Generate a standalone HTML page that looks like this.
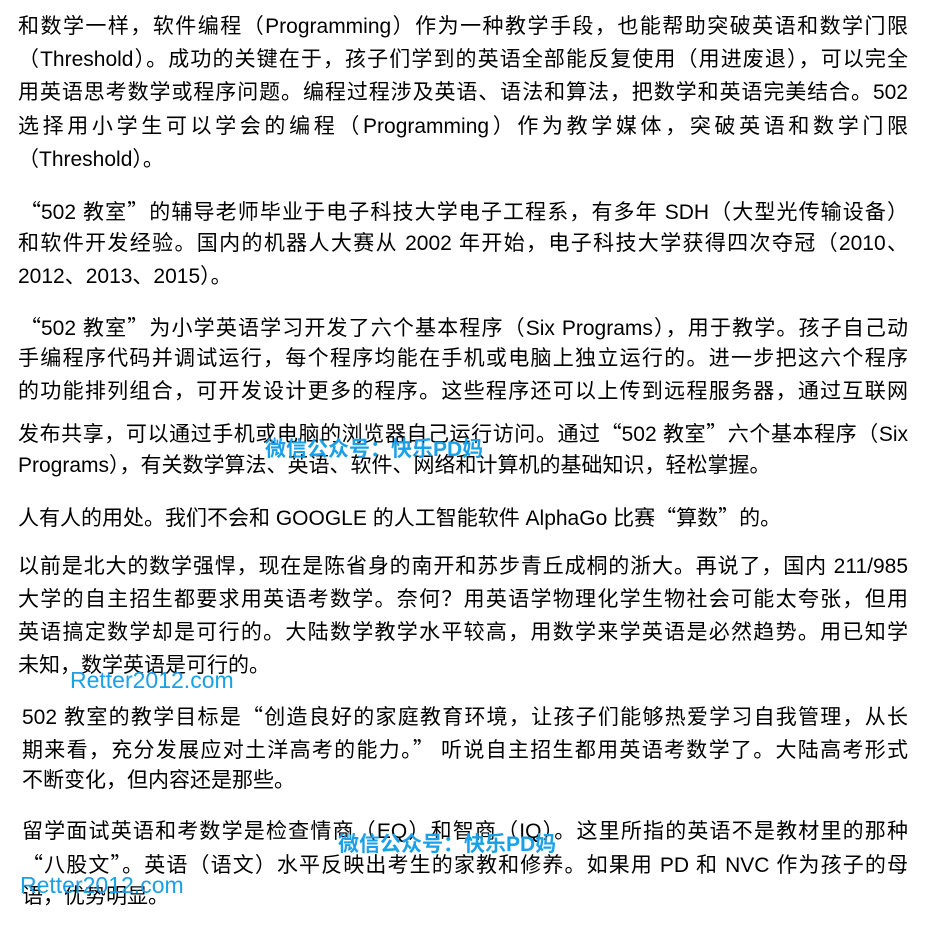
<!DOCTYPE html>
<html><head><meta charset="utf-8"><style>
body{margin:0;width:930px;height:926px;background:#fff;position:relative;overflow:hidden;font-family:"Liberation Sans","Noto Sans CJK SC",sans-serif;color:#000}
.l{position:absolute;height:28px;line-height:28px;font-size:21px;white-space:nowrap}
.j{text-align:justify;text-align-last:justify;white-space:normal;overflow:hidden}
.w{position:absolute;color:#1aa0e8;font-size:21px;font-weight:bold;white-space:nowrap;line-height:24px}
.r{position:absolute;color:#1aa0e8;font-size:23px;white-space:nowrap;line-height:24px}
.q{font-family:"Noto Sans CJK SC",sans-serif}
</style></head><body>
<div class="l j" style="left:18px;top:13px;width:890px">和数学一样，软件编程（Programming）作为一种教学手段，也能帮助突破英语和数学门限</div>
<div class="l j" style="left:18px;top:46px;width:890px">（Threshold）。成功的关键在于，孩子们学到的英语全部能反复使用（用进废退），可以完全</div>
<div class="l j" style="left:18px;top:79px;width:890px">用英语思考数学或程序问题。编程过程涉及英语、语法和算法，把数学和英语完美结合。502</div>
<div class="l j" style="left:18px;top:113px;width:890px">选择用小学生可以学会的编程（Programming）作为教学媒体，突破英语和数学门限</div>
<div class="l" style="left:18px;top:146px">（Threshold）。</div>

<div class="l j" style="left:20px;top:197px;width:888px"><span class="q">“</span>502 教室<span class="q">”</span>的辅导老师毕业于电子科技大学电子工程系，有多年 SDH（大型光传输设备）</div>
<div class="l j" style="left:18px;top:230px;width:890px">和软件开发经验。国内的机器人大赛从 2002 年开始，电子科技大学获得四次夺冠（2010、</div>
<div class="l" style="left:18px;top:263px">2012、2013、2015）。</div>

<div class="l j" style="left:20px;top:313px;width:888px"><span class="q">“</span>502 教室<span class="q">”</span>为小学英语学习开发了六个基本程序（Six Programs），用于教学。孩子自己动</div>
<div class="l j" style="left:18px;top:345px;width:890px">手编程序代码并调试运行，每个程序均能在手机或电脑上独立运行的。进一步把这六个程序</div>
<div class="l j" style="left:18px;top:378px;width:890px">的功能排列组合，可开发设计更多的程序。这些程序还可以上传到远程服务器，通过互联网</div>
<div class="l j" style="left:18px;top:419px;width:890px">发布共享，可以通过手机或电脑的浏览器自己运行访问。通过<span class="q">“</span>502 教室<span class="q">”</span>六个基本程序（Six</div>
<div class="l" style="left:18px;top:452px">Programs），有关数学算法、英语、软件、网络和计算机的基础知识，轻松掌握。</div>
<div class="w" style="left:265px;top:438px">微信公众号：快乐PD妈</div>

<div class="l" style="left:18px;top:503px">人有人的用处。我们不会和 GOOGLE 的人工智能软件 AlphaGo 比赛<span class="q">“</span>算数<span class="q">”</span>的。</div>

<div class="l j" style="left:18px;top:553px;width:890px">以前是北大的数学强悍，现在是陈省身的南开和苏步青丘成桐的浙大。再说了，国内 211/985</div>
<div class="l j" style="left:18px;top:586px;width:890px">大学的自主招生都要求用英语考数学。奈何？用英语学物理化学生物社会可能太夸张，但用</div>
<div class="l j" style="left:18px;top:619px;width:890px">英语搞定数学却是可行的。大陆数学教学水平较高，用数学来学英语是必然趋势。用已知学</div>
<div class="l" style="left:18px;top:652px">未知，数学英语是可行的。</div>
<div class="r" style="left:70px;top:668px">Retter2012.com</div>

<div class="l j" style="left:22px;top:702px;width:886px">502 教室的教学目标是<span class="q">“</span>创造良好的家庭教育环境，让孩子们能够热爱学习自我管理，从长</div>
<div class="l j" style="left:22px;top:735px;width:886px">期来看，充分发展应对土洋高考的能力。<span class="q">”</span> 听说自主招生都用英语考数学了。大陆高考形式</div>
<div class="l" style="left:22px;top:767px">不断变化，但内容还是那些。</div>

<div class="l j" style="left:22px;top:818px;width:886px">留学面试英语和考数学是检查情商（EQ）和智商（IQ）。这里所指的英语不是教材里的那种</div>
<div class="l j" style="left:22px;top:850px;width:886px"><span class="q">“</span>八股文<span class="q">”</span>。英语（语文）水平反映出考生的家教和修养。如果用 PD 和 NVC 作为孩子的母</div>
<div class="l" style="left:22px;top:883px">语，优势明显。</div>
<div class="w" style="left:338px;top:833px">微信公众号：快乐PD妈</div>
<div class="r" style="left:20px;top:873px">Retter2012.com</div>
</body></html>
